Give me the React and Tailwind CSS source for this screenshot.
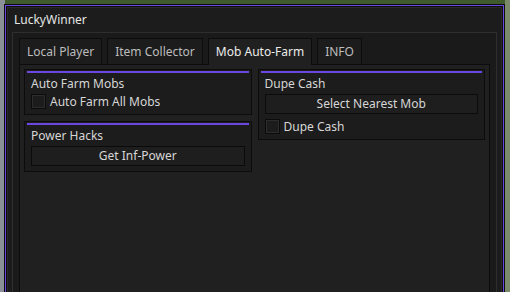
import React from "react";

const font = { fontFamily: '"Noto Sans", "Open Sans", sans-serif' };

const tabs = ["Local Player", "Item Collector", "Mob Auto-Farm", "INFO"];

const Checkbox = ({ label }) => (
  <div className="flex items-center gap-[4px]">
    <div className="w-[15px] h-[15px] border border-[#0b0b0b] outline outline-1 outline-[#2c2c2c] -outline-offset-2 bg-[#1c1c1c]" />
    <span className="text-[12px] text-[#d6d6d6] leading-none">{label}</span>
  </div>
);

const Button = ({ label }) => (
  <div className="h-[20px] border border-[#0b0b0b] bg-[#1e1e1e] flex items-center justify-center text-[12px] text-[#d6d6d6] leading-none">
    {label}
  </div>
);

const GroupBox = ({ title, children }) => (
  <div className="border border-[#0c0c0c] bg-[#1c1c1c] px-[2px] pt-[1px] pb-[5px]">
    <div className="h-[2px] bg-[#6b46e0]" />
    <div className="px-[4px]">
      <div className="text-[12px] text-[#d6d6d6] leading-none mt-[5px] mb-[4px] h-[12px]">{title}</div>
      <div className="flex flex-col gap-[5px]">{children}</div>
    </div>
  </div>
);

export default function App() {
  return (
    <div
      className="w-[510px] h-[292px] overflow-hidden pl-[4px] pt-[4px] pr-[5px] bg-[linear-gradient(90deg,#8a9096_0px,#8a9096_5px,#3f5a2c_5px,#3f5a2c_505px,#7a8a6a_505px)]"
      style={font}
    >
      <div className="h-[300px] border border-[#0d0d0d]">
        <div className="h-full border border-[#6b46e0]">
          <div className="h-full border border-[#0d0d0d] bg-[#191919]">
            <div className="h-full border border-[#2a2a2a] bg-[#1c1c1c] pl-[4px] pr-[4px] pt-[1px]">
              <div className="text-[12px] text-[#e6e6e6] h-[21px] flex items-center pl-[2px]">LuckyWinner</div>
              <div className="mt-[2px] h-full border border-[#2e2e2e] bg-[#1a1a1a] px-[6px] pt-[5px]">
                <div className="flex gap-[5px] h-[26px]">
                  {tabs.map((t) => {
                    const active = t === "Mob Auto-Farm";
                    return (
                      <div
                        key={t}
                        className={
                          active
                            ? "px-[7px] flex items-center border border-b-0 border-[#0c0c0c] bg-[#202020] text-[12px] text-[#ececec] relative z-10 h-[27px]"
                            : "px-[7px] flex items-center border border-b-0 border-[#0c0c0c] bg-[#1c1c1c] text-[12px] text-[#bdbdbd]"
                        }
                      >
                        {t}
                      </div>
                    );
                  })}
                </div>
                <div className="h-full border border-[#0c0c0c] bg-[#202020] px-[4px] pt-[4px] flex gap-[6px] items-start">
                  <div className="flex-1 flex flex-col gap-[6px]">
                    <GroupBox title="Auto Farm Mobs">
                      <Checkbox label="Auto Farm All Mobs" />
                    </GroupBox>
                    <GroupBox title="Power Hacks">
                      <Button label="Get Inf-Power" />
                    </GroupBox>
                  </div>
                  <div className="flex-1 flex flex-col gap-[6px]">
                    <GroupBox title="Dupe Cash">
                      <Button label="Select Nearest Mob" />
                      <Checkbox label="Dupe Cash" />
                    </GroupBox>
                  </div>
                </div>
              </div>
            </div>
          </div>
        </div>
      </div>
    </div>
  );
}
